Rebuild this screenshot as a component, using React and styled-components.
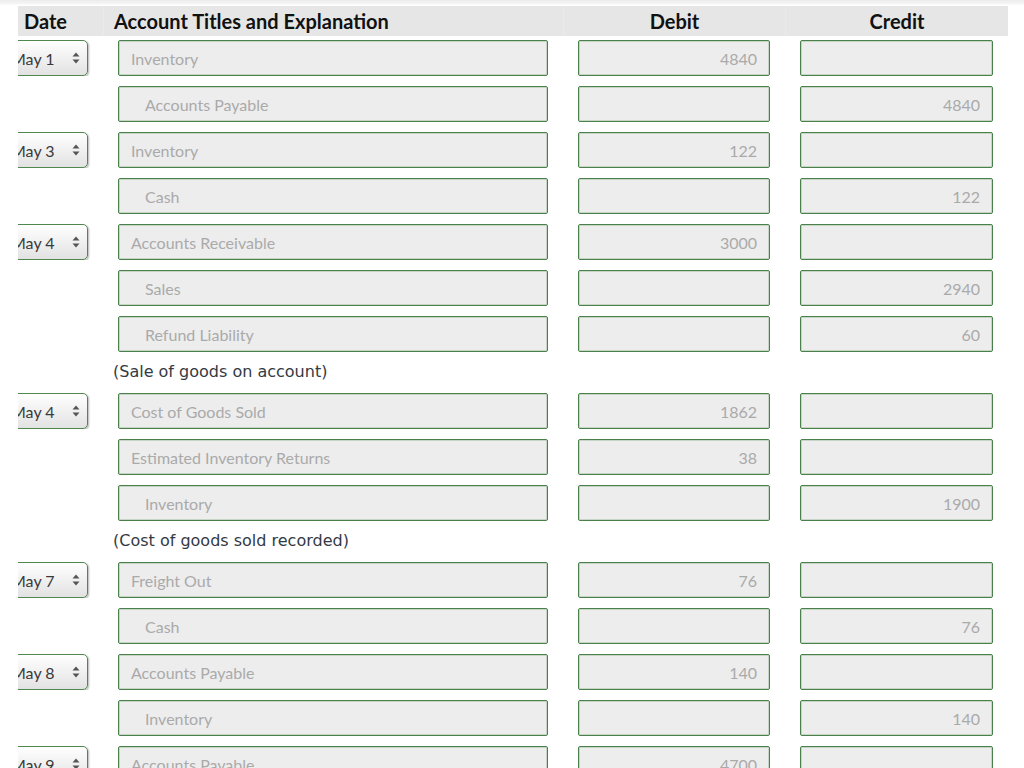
import React from 'react'
import styled, { createGlobalStyle } from 'styled-components'

const GlobalStyle = createGlobalStyle`
    html, body {
        margin: 0;
        padding: 0;
        background: #fff;
        overflow: hidden;
    }
    body {
        font-family: Lato, "Liberation Sans", sans-serif;
    }
`

const columns = '85px 460px 222px 223px'

const Page = styled.div`
    padding: 6px 16px 0 18px;
    height: 768px;
    box-sizing: border-box;
    background: linear-gradient(#ececec 0, #f6f6f6 4px, #fff 5px);
`

const HeaderRow = styled.div`
    display: grid;
    grid-template-columns: ${columns};
    height: 30px;
    background: #e6e6e6;
    margin-bottom: 4px;
`

const HeaderCell = styled.div`
    display: flex;
    align-items: center;
    justify-content: ${props => props.center ? 'center' : 'flex-start'};
    padding-left: ${props => props.center ? '0' : props.pad || '10px'};
    border-left: ${props => props.first ? 'none' : '1px solid #eaeaea'};
    font-family: Lato, "Liberation Sans", sans-serif;
    font-weight: 700;
    font-size: 20px;
    color: #111;
`

const Row = styled.div`
    display: grid;
    grid-template-columns: ${columns};
    height: 36px;
    margin-bottom: 10px;
`

const DateCell = styled.div`
    overflow: hidden;
    padding-right: 15px;
    display: flex;
`

const Select = styled.div`
    margin-left: -16px;
    flex: 1;
    display: flex;
    align-items: center;
    justify-content: space-between;
    padding: 0 7px 0 8px;
    border: 1px solid #4f874f;
    border-radius: 5px;
    background: linear-gradient(#ffffff, #e2e2e2);
    box-shadow: 1px 1px 2px rgba(0, 0, 0, 0.3);
    font-size: 16px;
    color: #3a3a3a;
`

const Cell = styled.div`
    padding: 0 15px;
    display: flex;
`

const Field = styled.div`
    flex: 1;
    display: flex;
    align-items: center;
    justify-content: ${props => props.numeric ? 'flex-end' : 'flex-start'};
    padding: 0 12px 0 ${props => props.indent ? '26px' : '12px'};
    background: #ededed;
    border: 1px solid #4a804a;
    border-radius: 2px;
    box-shadow: inset 0 0 0 1px rgba(130, 170, 130, 0.35);
    font-size: 16px;
    color: #aaa;
    white-space: nowrap;
    overflow: hidden;
`

const Explanation = styled.div`
    height: 32px;
    margin-top: -1px;
    padding-left: 95px;
    font-family: "DejaVu Sans", Verdana, sans-serif;
    font-size: 16px;
    line-height: 22px;
    color: #333a44;
`

const Arrows = () => (
    <svg width="8" height="12" viewBox="0 0 8 12">
        <path d="M4 0.5 L7.5 4.5 L0.5 4.5 Z" fill="#555" />
        <path d="M4 11.5 L7.5 7.5 L0.5 7.5 Z" fill="#555" />
    </svg>
)

const entries = [
    { date: 'May 1', account: 'Inventory', debit: '4840' },
    { account: 'Accounts Payable', indent: true, credit: '4840' },
    { date: 'May 3', account: 'Inventory', debit: '122' },
    { account: 'Cash', indent: true, credit: '122' },
    { date: 'May 4', account: 'Accounts Receivable', debit: '3000' },
    { account: 'Sales', indent: true, credit: '2940' },
    { account: 'Refund Liability', indent: true, credit: '60' },
    { note: '(Sale of goods on account)' },
    { date: 'May 4', account: 'Cost of Goods Sold', debit: '1862' },
    { account: 'Estimated Inventory Returns', debit: '38' },
    { account: 'Inventory', indent: true, credit: '1900' },
    { note: '(Cost of goods sold recorded)' },
    { date: 'May 7', account: 'Freight Out', debit: '76' },
    { account: 'Cash', indent: true, credit: '76' },
    { date: 'May 8', account: 'Accounts Payable', debit: '140' },
    { account: 'Inventory', indent: true, credit: '140' },
    { date: 'May 9', account: 'Accounts Payable', debit: '4700' },
]

const Entry = ({ entry }) => {
    if (entry.note) {
        return <Explanation>{entry.note}</Explanation>
    }
    const { date, account, debit, credit, indent } = entry
    return (
        <Row>
            <DateCell>
                {date && (
                    <Select>
                        <span>{date}</span>
                        <Arrows />
                    </Select>
                )}
            </DateCell>
            <Cell>
                <Field indent={indent}>{account}</Field>
            </Cell>
            <Cell>
                <Field numeric>{debit}</Field>
            </Cell>
            <Cell>
                <Field numeric>{credit}</Field>
            </Cell>
        </Row>
    )
}

export default function App() {
    return (
        <>
            <GlobalStyle />
            <Page>
                <HeaderRow>
                    <HeaderCell first pad="6px">Date</HeaderCell>
                    <HeaderCell>Account Titles and Explanation</HeaderCell>
                    <HeaderCell center>Debit</HeaderCell>
                    <HeaderCell center>Credit</HeaderCell>
                </HeaderRow>
                {entries.map((entry, i) => (
                    <Entry key={i} entry={entry} />
                ))}
            </Page>
        </>
    )
}
